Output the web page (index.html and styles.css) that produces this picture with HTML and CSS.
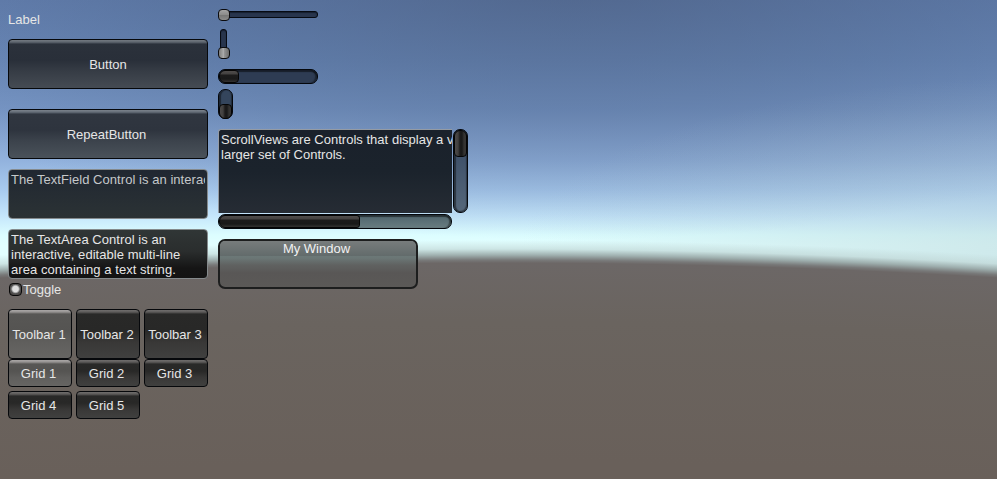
FILE: index.html
```html
<!DOCTYPE html>
<html lang="en">
<head>
<meta charset="utf-8">
<title>GUI Controls</title>
<link rel="stylesheet" href="styles.css">
</head>
<body>
<main class="scene">
  <section class="column controls">
    <div class="label">Label</div>
    <button class="button">Button</button>
    <button class="button repeat">RepeatButton</button>
    <div class="field single"><span>The TextField Control is an interac</span></div>
    <div class="field area"><span>The TextArea Control is an<br>interactive, editable multi-line<br>area containing a text string.</span></div>
    <div class="toggle"><i class="toggle-box"></i><span>Toggle</span></div>
    <div class="toolbar">
      <button class="tab on">Toolbar 1</button>
      <button class="tab">Toolbar 2</button>
      <button class="tab">Toolbar 3</button>
    </div>
    <div class="grid">
      <button class="tab on">Grid 1</button>
      <button class="tab">Grid 2</button>
      <button class="tab">Grid 3</button>
      <button class="tab">Grid 4</button>
      <button class="tab">Grid 5</button>
    </div>
  </section>
  <section class="column views">
    <div class="slider horizontal"><i class="knob"></i></div>
    <div class="slider vertical"><i class="knob"></i></div>
    <div class="bar hbar short"><i class="thumb"></i></div>
    <div class="bar vbar short"><i class="thumb"></i></div>
    <div class="scrollview">
      <div class="viewport"><p>ScrollViews are Controls that display a v<br>larger set of Controls.</p></div>
      <div class="bar vbar"><i class="thumb"></i></div>
      <div class="bar hbar"><i class="thumb"></i></div>
    </div>
    <div class="window"><div class="title">My Window</div></div>
  </section>
</main>
</body>
</html>
```
FILE: styles.css
```css
* { box-sizing: border-box; }

body {
  margin: 0;
  overflow: hidden;
  font: 13px/15px "Liberation Sans", Arial, sans-serif;
  color: #e6e6e6;
}

.scene {
  display: flex;
  gap: 10px;
  width: 997px;
  height: 479px;
  padding: 9px 8px 0;
  background:
    radial-gradient(circle 8362px at 500px 8602px,
      #69605a 0, #69605a 8140px, #6a645f 8280px, #6c6766 8339px,
      #787979 8342px, rgba(150, 165, 164, .88) 8347px, rgba(190, 212, 211, .6) 8353px, rgba(224, 255, 255, 0) 8362px),
    radial-gradient(ellipse 560px 170px at 1080px 245px, rgba(176, 200, 205, .45), rgba(176, 200, 205, .25) 50%, rgba(176, 200, 205, 0)),
    radial-gradient(ellipse 760px 260px at 570px -20px, rgba(68, 86, 118, .58), rgba(74, 98, 136, .4) 50%, rgba(90, 120, 170, 0)),
    linear-gradient(180deg,
      #6480b0 0, #6c8bbb 60px, #7998c7 110px, #92b2dd 160px, #a8caee 190px,
      #c4e5fb 215px, #dcfdff 235px, #e2ffff 245px, #e0ffff 100%);
}

.column { display: flex; flex-direction: column; align-items: flex-start; }
.controls { width: 200px; }
.views { width: 250px; }

button {
  padding: 0;
  font: inherit;
  color: #e6e6e6;
  border: 1px solid #06080b;
  border-radius: 4px;
}

.label { height: 30px; padding-top: 3px; }

.button {
  width: 200px;
  height: 50px;
  background: linear-gradient(180deg, #737981 0, #5f666f 2px, #4a515b 3px, #2b313b 4px, #292f39 20px, #363c45 31px, #454b53 100%);
}
.repeat {
  margin-top: 20px;
  padding-right: 3px;
  background: linear-gradient(180deg, #7b828b 0, #666e78 2px, #505863 3px, #303640 4px, #2e343e 20px, #3c434c 31px, #4a525a 100%);
}

.field {
  width: 200px;
  height: 50px;
  overflow: hidden;
  padding: 2px 2px 0;
  border: 1px solid #858a8c;
  border-radius: 4px;
  letter-spacing: .05px;
}
.field span { display: block; overflow: hidden; white-space: nowrap; }
.single { margin-top: 10px; color: #c5c8ca; background: linear-gradient(#202731, #293034 80%, #2b3133); }
.area { margin-top: 10px; background: linear-gradient(#303636, #2a2d2d 45%, #151515 80%, #131313); }

.toggle { display: flex; align-items: center; height: 15px; margin-top: 3px; }
.toggle-box {
  width: 13px;
  height: 13px;
  margin: 0 1px;
  border: 1px solid #080808;
  border-radius: 4px;
  background: radial-gradient(circle at 5.5px 5px, #dedede 0 2.8px, #999 3.8px, #555 4.6px, #494644 6px);
}

.toolbar, .grid {
  display: grid;
  grid-template-columns: repeat(3, 64px);
  gap: 4px;
}
.toolbar { grid-auto-rows: 50px; margin-top: 12px; }
.grid { grid-auto-rows: 28px; }
.tab {
  padding-right: 3px;
  background: linear-gradient(#706e6d 0, #5d5b5a 2px, #474645 3px, #292928 4px, #282827 42%, #393837 68%, #40403f);
}
.toolbar .tab { padding-right: 2px; }
.tab.on { background: linear-gradient(#aaa7a6 0, #969392 2px, #777573 3px, #585755 4px, #555452 42%, #605f5d 68%, #666563); }

.slider {
  border: 1px solid #060a12;
  border-radius: 3px;
  background: #28354d;
  box-shadow: inset 0 1px 1px #151e30;
}
.slider.horizontal { width: 100px; height: 7px; margin-top: 2px; }
.slider.vertical { width: 7px; height: 30px; margin: 11px 0 0 2px; }
.knob {
  display: block;
  width: 12px;
  height: 12px;
  border: 1px solid #0b0b0d;
  border-radius: 4px;
  background: linear-gradient(#a3a3a3, #8d8d8c 45%, #747473 46%, #8b8b8a);
}
.horizontal .knob { margin: -3px 0 0 -1px; }
.vertical .knob { margin: 17px 0 0 -3px; background: linear-gradient(90deg, #7d7d7c, #aaa 45%, #929292 55%, #6c6c6b); }

.bar { border: 1px solid #04070c; border-radius: 7px; }
.hbar { height: 15px; box-shadow: inset 0 2px 1px rgba(0, 0, 0, .5), inset -2px 0 1px rgba(0, 0, 0, .35); }
.vbar { width: 15px; box-shadow: inset 2px 0 1px rgba(0, 0, 0, .45), inset -1px -1px 1px rgba(0, 0, 0, .4); }
.thumb { display: block; border: 1px solid #050505; }
.hbar .thumb {
  height: 13px;
  border-radius: 6px 3px 3px 6px;
  background: linear-gradient(#4f4c4b 0, #434140 3px, #1c1b1b 4px, #191919 8px, #2b2a29 10px, #333130);
}
.vbar .thumb {
  width: 13px;
  border-radius: 6px;
  background: linear-gradient(90deg, #4b4948, #42403f 3px, #1c1b1b 5px, #191919 7px, #343332 9px, #343332);
}
.hbar.short { width: 100px; margin-top: 10px; background: #2e3c53; }
.hbar.short .thumb { width: 20px; border-radius: 6px 4px 4px 6px; }
.vbar.short { height: 30px; margin-top: 5px; background: #34455c; }
.vbar.short .thumb { height: 15px; margin-top: 14px; border-radius: 4px 4px 6px 6px; }

.scrollview {
  display: grid;
  grid-template-columns: 234px 15px;
  grid-template-rows: 84px 15px;
  gap: 1px;
  margin-top: 10px;
}
.viewport {
  overflow: hidden;
  padding: 2px 0 0 2px;
  border-top: 1px solid #959ba3;
  border-left: 1px solid #959ba3;
  border-top-left-radius: 3px;
  background: linear-gradient(#1a212b, #1b232c 50%, #262c34);
}
.viewport p { margin: 0; white-space: nowrap; letter-spacing: .02px; }
.scrollview .vbar { background: linear-gradient(#354762, #55677a); }
.scrollview .vbar .thumb { height: 27px; border-radius: 6px 6px 4px 4px; }
.scrollview .hbar { background: linear-gradient(#4f646c, #687c80); }
.scrollview .hbar .thumb { width: 141px; }

.window {
  width: 200px;
  height: 50px;
  margin-top: 10px;
  overflow: hidden;
  border: 2px solid #1d1e1e;
  border-radius: 7px;
  background: linear-gradient(#738180 0, #6b7776 17px, #606261 24px, #595756 32px, #5b5957);
}
.title {
  height: 15px;
  padding-right: 3px;
  text-align: center;
  color: #f1f1f1;
  background: linear-gradient(#787c7c, #626b6b);
}
```
